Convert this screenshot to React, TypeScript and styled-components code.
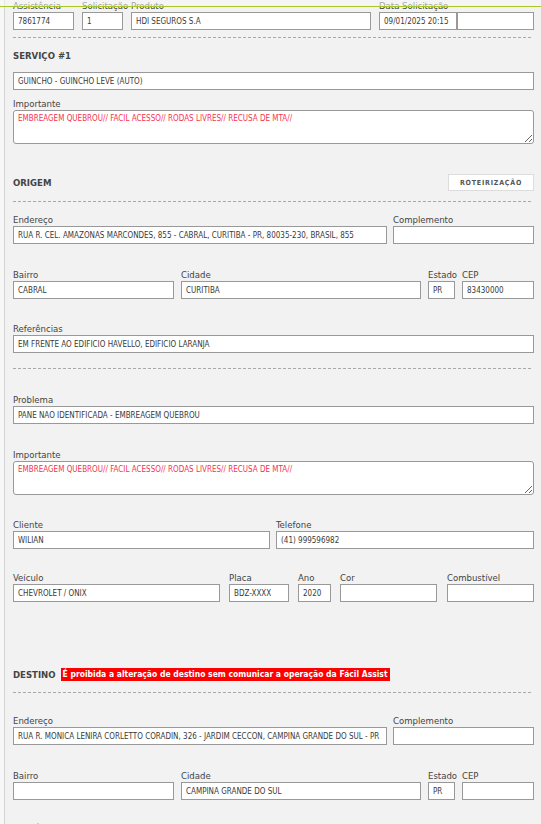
import React from 'react';
import styled, { createGlobalStyle } from 'styled-components';

const GlobalStyle = createGlobalStyle`
  html, body {
    margin: 0;
    padding: 0;
    background: #f7f7f7;
  }
  body {
    font-family: "DejaVu Sans Condensed", "DejaVu Sans", sans-serif;
    color: #444;
  }
`;

const Page = styled.div`
  position: relative;
  height: 824px;
  overflow: hidden;
`;

// fixed header strip that overlays the scrolled form
const TopBar = styled.div`
  position: absolute;
  top: 0;
  left: 0;
  right: 0;
  height: 6px;
  background: rgba(248, 248, 248, 0.55);
  border-bottom: 1px solid #a9c825;
`;

const Panel = styled.div`
  margin-left: 4px;
  border-left: 1px solid #d4d4d4;
  background: #f2f2f2;
  padding: 0 7px 40px 8px;
  min-height: 900px;
`;

const Row = styled.div<{ $mt?: number }>`
  display: flex;
  align-items: flex-end;
  margin-top: ${p => p.$mt ?? 0}px;
`;

const Field = styled.div<{ $w?: number; $gap?: number }>`
  display: flex;
  flex-direction: column;
  width: ${p => (p.$w ? `${p.$w}px` : 'auto')};
  flex: ${p => (p.$w ? 'none' : '1')};
  margin-right: ${p => p.$gap ?? 0}px;
  &:last-child {
    margin-right: 0;
  }
`;

const Label = styled.label`
  font-size: 9.5px;
  line-height: 12px;
  height: 12px;
  color: #444;
  white-space: nowrap;
`;

const Input = styled.input`
  box-sizing: border-box;
  width: 100%;
  height: 18px;
  margin: 0;
  padding: 0 4px;
  border: 1px solid #999;
  background: #fff;
  font-family: "DejaVu Sans Condensed", "DejaVu Sans", sans-serif;
  font-size: 8px;
  line-height: 16px;
  color: #3a3a3a;
  outline: none;
`;

const TextArea = styled.textarea`
  box-sizing: border-box;
  width: 100%;
  height: 34px;
  margin: 0;
  padding: 3px 4px;
  border: 1px solid #999;
  border-radius: 3px;
  background: #fff;
  font-family: "DejaVu Sans Condensed", "DejaVu Sans", sans-serif;
  font-size: 8px;
  line-height: 10px;
  color: #f5334f;
  resize: vertical;
  outline: none;
  display: block;
`;

const Dashed = styled.div<{ $mt: number }>`
  margin: ${p => p.$mt}px 3px 0 0;
  border-top: 1px dashed #a8a8a8;
  height: 0;
`;

const SectionHead = styled.div<{ $mt: number }>`
  display: flex;
  align-items: center;
  justify-content: space-between;
  height: 17px;
  margin-top: ${p => p.$mt}px;
`;

const TitleWrap = styled.div`
  display: flex;
  align-items: center;
  gap: 5px;
`;

const Title = styled.span`
  font-size: 9.5px;
  font-weight: bold;
  color: #444;
`;

const Warning = styled.span`
  background: #ff0000;
  color: #fff;
  font-size: 8.5px;
  font-weight: bold;
  line-height: 13px;
  padding: 0 2px;
  white-space: nowrap;
`;

const RouteButton = styled.button`
  box-sizing: border-box;
  width: 86px;
  height: 17px;
  padding: 0;
  background: #fff;
  border: 1px solid #dcdcdc;
  font-family: "DejaVu Sans Condensed", "DejaVu Sans", sans-serif;
  font-size: 7px;
  font-weight: bold;
  letter-spacing: 0.8px;
  color: #555;
  cursor: pointer;
`;

const importante = 'EMBREAGEM QUEBROU// FACIL ACESSO// RODAS LIVRES// RECUSA DE MTA//';

const App: React.FC = () => {
  return (
    <Page>
      <GlobalStyle />
      <Panel>
        <Row $mt={0}>
          <Field $w={61} $gap={8}>
            <Label>Assistência</Label>
            <Input readOnly value="7861774" />
          </Field>
          <Field $w={41} $gap={8}>
            <Label>Solicitação</Label>
            <Input readOnly value="1" />
          </Field>
          <Field $w={240} $gap={8}>
            <Label>Produto</Label>
            <Input readOnly value="HDI SEGUROS S.A" />
          </Field>
          <Field $w={78}>
            <Label>Data Solicitação</Label>
            <Input readOnly value="09/01/2025 20:15" />
          </Field>
          <Field>
            <Input readOnly value="" />
          </Field>
        </Row>

        <Dashed $mt={7} />

        <SectionHead $mt={9}>
          <Title>SERVIÇO #1</Title>
        </SectionHead>

        <Row $mt={8}>
          <Field>
            <Input readOnly value="GUINCHO - GUINCHO LEVE (AUTO)" />
          </Field>
        </Row>

        <Row $mt={8}>
          <Field>
            <Label>Importante</Label>
            <TextArea readOnly value={importante} />
          </Field>
        </Row>

        <SectionHead $mt={30}>
          <Title>ORIGEM</Title>
          <RouteButton>ROTEIRIZAÇÃO</RouteButton>
        </SectionHead>

        <Dashed $mt={10} />

        <Row $mt={12}>
          <Field $w={374} $gap={6}>
            <Label>Endereço</Label>
            <Input readOnly value="RUA R. CEL. AMAZONAS MARCONDES, 855 - CABRAL, CURITIBA - PR, 80035-230, BRASIL, 855" />
          </Field>
          <Field>
            <Label>Complemento</Label>
            <Input readOnly value="" />
          </Field>
        </Row>

        <Row $mt={25}>
          <Field $w={161} $gap={7}>
            <Label>Bairro</Label>
            <Input readOnly value="CABRAL" />
          </Field>
          <Field $w={240} $gap={7}>
            <Label>Cidade</Label>
            <Input readOnly value="CURITIBA" />
          </Field>
          <Field $w={27} $gap={7}>
            <Label>Estado</Label>
            <Input readOnly value="PR" />
          </Field>
          <Field>
            <Label>CEP</Label>
            <Input readOnly value="83430000" />
          </Field>
        </Row>

        <Row $mt={24}>
          <Field>
            <Label>Referências</Label>
            <Input readOnly value="EM FRENTE AO EDIFICIO HAVELLO, EDIFICIO LARANJA" />
          </Field>
        </Row>

        <Dashed $mt={15} />

        <Row $mt={25}>
          <Field>
            <Label>Problema</Label>
            <Input readOnly value="PANE NÃO IDENTIFICADA - EMBREAGEM QUEBROU" />
          </Field>
        </Row>

        <Row $mt={25}>
          <Field>
            <Label>Importante</Label>
            <TextArea readOnly value={importante} />
          </Field>
        </Row>

        <Row $mt={24}>
          <Field $w={257} $gap={6}>
            <Label>Cliente</Label>
            <Input readOnly value="WILIAN" />
          </Field>
          <Field>
            <Label>Telefone</Label>
            <Input readOnly value="(41) 999596982" />
          </Field>
        </Row>

        <Row $mt={23}>
          <Field $w={207} $gap={9}>
            <Label>Veículo</Label>
            <Input readOnly value="CHEVROLET / ONIX" />
          </Field>
          <Field $w={60} $gap={9}>
            <Label>Placa</Label>
            <Input readOnly value="BDZ-XXXX" />
          </Field>
          <Field $w={33} $gap={9}>
            <Label>Ano</Label>
            <Input readOnly value="2020" />
          </Field>
          <Field $w={97} $gap={10}>
            <Label>Cor</Label>
            <Input readOnly value="" />
          </Field>
          <Field>
            <Label>Combustível</Label>
            <Input readOnly value="" />
          </Field>
        </Row>

        <SectionHead $mt={64}>
          <TitleWrap>
            <Title>DESTINO</Title>
            <Warning>É proibida a alteração de destino sem comunicar a operação da Fácil Assist</Warning>
          </TitleWrap>
        </SectionHead>

        <Dashed $mt={9} />

        <Row $mt={22}>
          <Field $w={374} $gap={6}>
            <Label>Endereço</Label>
            <Input readOnly value="RUA R. MÔNICA LENIRA CORLETTO CORADIN, 326 - JARDIM CECCON, CAMPINA GRANDE DO SUL - PR" />
          </Field>
          <Field>
            <Label>Complemento</Label>
            <Input readOnly value="" />
          </Field>
        </Row>

        <Row $mt={25}>
          <Field $w={161} $gap={7}>
            <Label>Bairro</Label>
            <Input readOnly value="" />
          </Field>
          <Field $w={240} $gap={7}>
            <Label>Cidade</Label>
            <Input readOnly value="CAMPINA GRANDE DO SUL" />
          </Field>
          <Field $w={27} $gap={7}>
            <Label>Estado</Label>
            <Input readOnly value="PR" />
          </Field>
          <Field>
            <Label>CEP</Label>
            <Input readOnly value="" />
          </Field>
        </Row>

        <Row $mt={22}>
          <Field>
            <Label>Referências</Label>
            <Input readOnly value="" />
          </Field>
        </Row>
      </Panel>
      <TopBar />
    </Page>
  );
};

export default App;
